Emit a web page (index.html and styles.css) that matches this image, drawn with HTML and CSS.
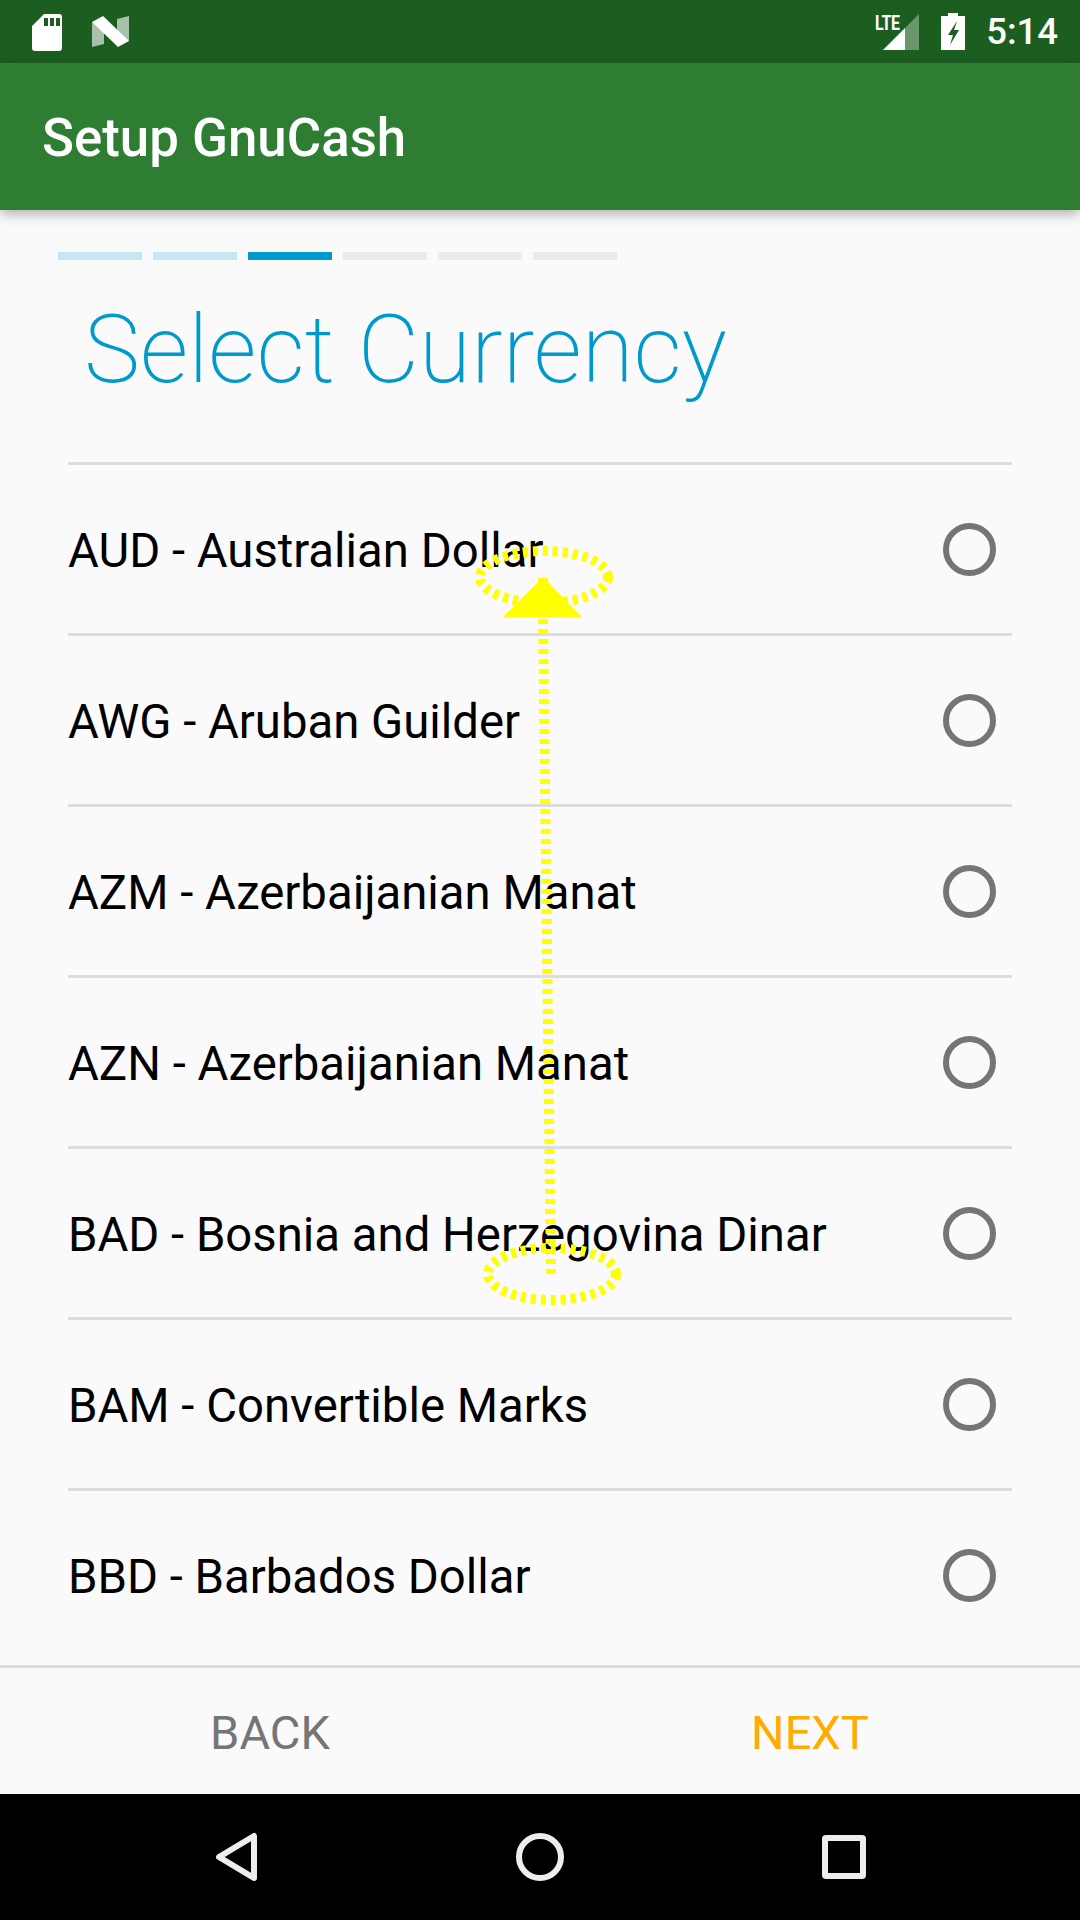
FILE: index.html
```html
<!DOCTYPE html>
<html lang="en">
<head>
<meta charset="utf-8">
<title>Setup GnuCash</title>
<link rel="stylesheet" href="styles.css">
</head>
<body>
<div class="screen">
  <header class="status-bar">
    <div class="status-left">
      <svg class="icon-sd" viewBox="0 0 30 37"><path fill="#fff" fill-rule="evenodd" d="M12 0H27a3 3 0 0 1 3 3V34a3 3 0 0 1-3 3H3a3 3 0 0 1-3-3V12ZM12 4v8h4V4ZM18 4v8h4V4ZM24 4v8h4V4Z"/></svg>
      <svg class="icon-n" viewBox="0 0 37 31"><path fill="#fff" fill-opacity=".62" d="M0 6 12 13V28L0 31ZM25 3 37 0V25L25 19Z"/><path fill="#fff" d="M0 6 11 0 37 25 26 31Z"/></svg>
    </div>
    <div class="status-right">
      <div class="signal">
        <span class="lte">LTE</span>
        <svg class="icon-signal" viewBox="0 0 36 36"><path fill="#fff" fill-opacity=".35" d="M22 14 36 0V36H22Z"/><path fill="#fff" d="M0 36 22 14V36Z"/></svg>
      </div>
      <svg class="icon-battery" viewBox="0 0 24 37"><path fill="#fff" fill-rule="evenodd" d="M7 0H17V3H24V37H0V3H7ZM16 8 7 22H12L9 32 18 17H13Z"/></svg>
      <span class="clock">5:14</span>
    </div>
  </header>
  <div class="app-bar">Setup GnuCash</div>
  <main class="content">
    <div class="progress">
      <span class="step step-done"></span>
      <span class="step step-done"></span>
      <span class="step step-current"></span>
      <span class="step"></span>
      <span class="step"></span>
      <span class="step"></span>
    </div>
    <h1 class="title">Select Currency</h1>
    <ul class="list">
      <li class="row"><span class="row-label">AUD - Australian Dollar</span><i class="radio"></i></li>
      <li class="row"><span class="row-label">AWG - Aruban Guilder</span><i class="radio"></i></li>
      <li class="row"><span class="row-label">AZM - Azerbaijanian Manat</span><i class="radio"></i></li>
      <li class="row"><span class="row-label">AZN - Azerbaijanian Manat</span><i class="radio"></i></li>
      <li class="row"><span class="row-label">BAD - Bosnia and Herzegovina Dinar</span><i class="radio"></i></li>
      <li class="row"><span class="row-label">BAM - Convertible Marks</span><i class="radio"></i></li>
      <li class="row"><span class="row-label">BBD - Barbados Dollar</span><i class="radio"></i></li>
    </ul>
  </main>
  <footer class="footer">
    <span class="btn btn-back">BACK</span>
    <span class="btn btn-next">NEXT</span>
  </footer>
  <nav class="nav-bar">
    <svg class="nav-icon" viewBox="0 0 60 60"><path class="nav-stroke" d="M48 9V51L13 30Z"/></svg>
    <svg class="nav-icon" viewBox="0 0 60 60"><circle class="nav-stroke" cx="30" cy="30" r="21"/></svg>
    <svg class="nav-icon" viewBox="0 0 60 60"><rect class="nav-stroke" x="11" y="11" width="38" height="38" rx="1"/></svg>
  </nav>
  <svg class="gesture" viewBox="0 0 1080 1920">
    <ellipse class="dots" cx="544" cy="577" rx="64" ry="26"/>
    <ellipse class="dots" cx="552" cy="1274" rx="64" ry="26"/>
    <path class="track" d="M551 1274 543 616"/>
    <path class="head" d="M503 617H582L548 582V578H538V582Z"/>
  </svg>
</div>
</body>
</html>
```
FILE: styles.css
```css
* { box-sizing: border-box; }
html, body { margin: 0; padding: 0; }
body { width: 1080px; height: 1920px; overflow: hidden; font-family: Roboto, "Liberation Sans", sans-serif; }
.screen { position: relative; width: 1080px; height: 1920px; display: flex; flex-direction: column; background: #fafafa; }

.status-bar { height: 63px; flex: none; background: #1b5e20; display: flex; justify-content: space-between; align-items: center; padding: 0 22px 0 32px; color: #fff; }
.status-left { display: flex; align-items: center; gap: 30px; }
.icon-sd { width: 30px; height: 37px; display: block; margin-top: 1px; }
.icon-n { width: 37px; height: 31px; display: block; }
.status-right { display: flex; align-items: center; }
.signal { position: relative; width: 45px; height: 36px; margin-right: 22px; }
.icon-signal { position: absolute; right: 0; top: 0; width: 36px; height: 36px; }
.lte { position: absolute; left: 1px; top: 0; font-size: 20px; line-height: 18px; font-weight: 700; letter-spacing: -.5px; transform: scaleX(.8); transform-origin: left top; }
.icon-battery { width: 24px; height: 37px; margin-right: 21px; display: block; }
.clock { font-size: 36.5px; font-weight: 500; line-height: 42px; }

.app-bar { height: 147px; flex: none; background: #2e7d32; color: #fff; font-size: 52.8px; font-weight: 500; line-height: 151px; padding-left: 42px; box-shadow: 0 4px 12px rgba(0,0,0,.3); position: relative; z-index: 1; }

.content { flex: 1; display: flex; flex-direction: column; min-height: 0; overflow: hidden; }
.progress { display: flex; gap: 11px; padding: 42px 0 0 58px; }
.step { width: 84px; height: 8px; background: #ebebeb; }
.step-done { background: #c5e7f4; }
.step-current { background: #0099cc; }
.title { margin: 0; padding: 30px 0 0 84px; font-size: 94.6px; font-weight: 200; color: #0099cc; line-height: 120px; height: 202px; }

.list { list-style: none; margin: 0 68px; padding: 0; }
.row { height: 171px; border-top: 3px solid #ddd; display: flex; align-items: center; justify-content: space-between; font-size: 47.3px; color: #000; padding-right: 16px; }
.row-label { margin-top: 3px; }
.radio { width: 53px; height: 53px; border: 6px solid #757575; border-radius: 50%; display: block; }

.footer { height: 129px; flex: none; border-top: 3px solid #ddd; background: #fafafa; display: grid; grid-template-columns: 1fr 1fr; align-items: center; justify-items: center; font-size: 47px; line-height: 56px; padding-top: 4px; }
.btn-back { color: #757575; }
.btn-next { color: #ffab00; }

.nav-bar { height: 126px; flex: none; background: #000; display: grid; grid-template-columns: 1fr 1fr 1fr; justify-items: center; align-items: center; padding: 0 84px; }
.nav-icon { width: 60px; height: 60px; display: block; }
.nav-stroke { fill: none; stroke: #eee; stroke-width: 6; stroke-linejoin: round; }

.gesture { position: absolute; left: 0; top: 0; width: 1080px; height: 1920px; pointer-events: none; }
.dots { fill: none; stroke: #ff0; stroke-width: 10; stroke-dasharray: 5 5; }
.track { fill: none; stroke: #ff0; stroke-width: 10; stroke-dasharray: 5 5; }
.head { fill: #ff0; }
```
